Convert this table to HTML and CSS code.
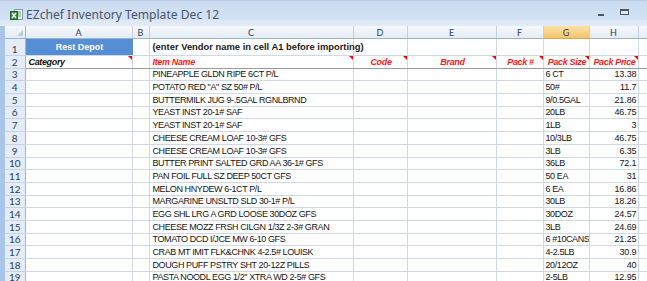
FILE: index.html
```
<!DOCTYPE html>
<html>
<head>
<meta charset="utf-8">
<link rel="stylesheet" href="styles.css">
</head>
<body>
<div class="window">
  <div class="titlebar">
    <svg class="xl-icon" width="13" height="13" viewBox="0 0 13 13">
      <rect x="4.5" y="1.5" width="8" height="10" fill="#f4f6f8" stroke="#8a97a6"/>
      <line x1="7" y1="4" x2="11" y2="4" stroke="#6ca36c"/>
      <line x1="7" y1="6" x2="11" y2="6" stroke="#6ca36c"/>
      <line x1="7" y1="8" x2="11" y2="8" stroke="#6ca36c"/>
      <rect x="0.5" y="3.5" width="7" height="8" fill="#2f8a3c" stroke="#1f6a2b"/>
      <path d="M2 5 L6 10 M6 5 L2 10" stroke="#fff" stroke-width="1.3"/>
    </svg>
    <span class="title">EZchef Inventory Template Dec 12</span>
    <div class="controls">
      <svg width="8" height="8" viewBox="0 0 8 8"><rect x="1" y="5" width="6" height="2" fill="#4a5568"/></svg>
      <svg width="9" height="8" viewBox="0 0 9 8"><rect x="0.5" y="0.5" width="8" height="5" fill="#dfe7f1" stroke="#4a5568"/><rect x="0" y="0" width="9" height="2" fill="#4a5568"/></svg>
    </div>
  </div>
  <div class="sheet">
    <div class="strip"></div>
    <table class="grid">
      <colgroup>
        <col class="c-rn"><col class="c-a"><col class="c-b"><col class="c-c"><col class="c-d"><col class="c-e"><col class="c-f"><col class="c-g"><col class="c-h"><col class="c-i">
      </colgroup>
      <tr class="colhead">
        <th class="corner"><span class="selall"></span></th>
        <th>A</th><th>B</th><th>C</th><th>D</th><th>E</th><th>F</th><th class="sel">G</th><th>H</th><th></th>
      </tr>
      <tr class="r1">
        <th class="rn">1</th>
        <td class="depot">Rest Depot</td><td></td>
        <td class="note">(enter Vendor name in cell A1 before importing)</td>
        <td></td><td></td><td></td><td></td><td></td><td></td>
      </tr>
      <tr class="r2">
        <th class="rn">2</th>
        <td class="hdr black cm">Category</td><td></td>
        <td class="hdr cm">Item Name</td>
        <td class="hdr ctr cm">Code</td>
        <td class="hdr ctr cm">Brand</td>
        <td class="hdr ctr cm">Pack #</td>
        <td class="hdr ctr cm">Pack Size</td>
        <td class="hdr ctr cm">Pack Price</td>
        <td></td>
      </tr>
      <tr><th class="rn">3</th><td></td><td></td><td>PINEAPPLE GLDN RIPE 6CT P/L</td><td></td><td></td><td></td><td class="sz">6 CT</td><td class="num">13.38</td><td></td></tr>
      <tr><th class="rn">4</th><td></td><td></td><td>POTATO RED "A" SZ 50# P/L</td><td></td><td></td><td></td><td class="sz">50#</td><td class="num">11.7</td><td></td></tr>
      <tr><th class="rn">5</th><td></td><td></td><td>BUTTERMILK JUG 9-.5GAL RGNLBRND</td><td></td><td></td><td></td><td class="sz">9/0.5GAL</td><td class="num">21.86</td><td></td></tr>
      <tr><th class="rn">6</th><td></td><td></td><td>YEAST INST 20-1# SAF</td><td></td><td></td><td></td><td class="sz">20LB</td><td class="num">46.75</td><td></td></tr>
      <tr><th class="rn">7</th><td></td><td></td><td>YEAST INST 20-1# SAF</td><td></td><td></td><td></td><td class="sz">1LB</td><td class="num">3</td><td></td></tr>
      <tr><th class="rn">8</th><td></td><td></td><td>CHEESE CREAM LOAF 10-3# GFS</td><td></td><td></td><td></td><td class="sz">10/3LB</td><td class="num">46.75</td><td></td></tr>
      <tr><th class="rn">9</th><td></td><td></td><td>CHEESE CREAM LOAF 10-3# GFS</td><td></td><td></td><td></td><td class="sz">3LB</td><td class="num">6.35</td><td></td></tr>
      <tr><th class="rn">10</th><td></td><td></td><td>BUTTER PRINT SALTED GRD AA 36-1# GFS</td><td></td><td></td><td></td><td class="sz">36LB</td><td class="num">72.1</td><td></td></tr>
      <tr><th class="rn">11</th><td></td><td></td><td>PAN FOIL FULL SZ DEEP 50CT GFS</td><td></td><td></td><td></td><td class="sz">50 EA</td><td class="num">31</td><td></td></tr>
      <tr><th class="rn">12</th><td></td><td></td><td>MELON HNYDEW 6-1CT P/L</td><td></td><td></td><td></td><td class="sz">6 EA</td><td class="num">16.86</td><td></td></tr>
      <tr><th class="rn">13</th><td></td><td></td><td>MARGARINE UNSLTD SLD 30-1# P/L</td><td></td><td></td><td></td><td class="sz">30LB</td><td class="num">18.26</td><td></td></tr>
      <tr><th class="rn">14</th><td></td><td></td><td>EGG SHL LRG A GRD LOOSE 30DOZ GFS</td><td></td><td></td><td></td><td class="sz">30DOZ</td><td class="num">24.57</td><td></td></tr>
      <tr><th class="rn">15</th><td></td><td></td><td>CHEESE MOZZ FRSH CILGN 1/3Z 2-3# GRAN</td><td></td><td></td><td></td><td class="sz">3LB</td><td class="num">24.69</td><td></td></tr>
      <tr><th class="rn">16</th><td></td><td></td><td>TOMATO DCD I/JCE MW 6-10 GFS</td><td></td><td></td><td></td><td class="sz">6 #10CANS</td><td class="num">21.25</td><td></td></tr>
      <tr><th class="rn">17</th><td></td><td></td><td>CRAB MT IMIT FLK&amp;CHNK 4-2.5# LOUISK</td><td></td><td></td><td></td><td class="sz">4-2.5LB</td><td class="num">30.9</td><td></td></tr>
      <tr><th class="rn">18</th><td></td><td></td><td>DOUGH PUFF PSTRY SHT 20-12Z PILLS</td><td></td><td></td><td></td><td class="sz">20/12OZ</td><td class="num">40</td><td></td></tr>
      <tr><th class="rn">19</th><td></td><td></td><td>PASTA NOODL EGG 1/2" XTRA WD 2-5# GFS</td><td></td><td></td><td></td><td class="sz">2-5LB</td><td class="num">12.95</td><td></td></tr>
    </table>
  </div>
</div>
</body>
</html>
```
FILE: styles.css
```
html, body {
  margin: 0;
  padding: 0;
  background: #ffffff;
  overflow: hidden;
}
.window {
  width: 647px;
  height: 281px;
  overflow: hidden;
  display: flex;
  flex-direction: column;
}
.titlebar {
  height: 26px;
  flex: none;
  display: flex;
  align-items: center;
  padding: 2px 0 0 10px;
  box-sizing: border-box;
  background: linear-gradient(#cbdcf1 0%, #d3e2f4 74%, #dde8f6 78%, #e2ebf7 100%);
  border-top: 1px solid #b6c9e2;
}
.xl-icon {
  flex: none;
  margin-right: 3px;
}
.title {
  font-family: "Noto Sans", "DejaVu Sans", sans-serif;
  font-size: 12.1px;
  color: #4b5566;
}
.controls {
  margin-left: auto;
  display: flex;
  gap: 15px;
  margin-right: 18px;
  align-items: center;
  padding-bottom: 3px;
}
.sheet {
  display: flex;
  flex: 1;
}
.strip {
  width: 5px;
  flex: none;
  background: #a9c5ea;
}
.grid {
  border-collapse: collapse;
  table-layout: fixed;
  width: 642px;
  font-family: "Liberation Sans", Arial, sans-serif;
  font-size: 9px;
  letter-spacing: -0.4px;
  color: #151515;
}
.c-rn { width: 20px; }
.c-a { width: 107px; }
.c-b { width: 17px; }
.c-c { width: 204px; }
.c-d { width: 54px; }
.c-e { width: 89px; }
.c-f { width: 47px; }
.c-g { width: 46px; }
.c-h { width: 49px; }
.c-i { width: 9px; }
.grid td {
  border: 1px solid #d0d7e5;
  border-top: none;
  border-left: none;
  padding: 0 1px 0 3px;
  height: 11.7px;
  line-height: 11px;
  vertical-align: bottom;
  white-space: nowrap;
  overflow: hidden;
}
.grid td.sz {
  padding: 0 0 0 2px;
}
.colhead th {
  height: 12px;
  padding: 0;
  font-weight: normal;
  font-family: Lato, "Liberation Sans", sans-serif;
  font-size: 9px;
  letter-spacing: 0;
  line-height: 11px;
  color: #27415e;
  background: linear-gradient(#f6f9fc, #e4ebf4);
  border-right: 1px solid #c5d2e2;
  border-bottom: 1px solid #9eb6ce;
  vertical-align: middle;
}
.colhead th.sel {
  background: linear-gradient(#fbe1a6, #f2c46a);
  border-bottom-color: #e2a646;
}
.colhead th.corner {
  position: relative;
  border-right: 1px solid #9eb6ce;
}
.selall {
  position: absolute;
  right: 2px;
  bottom: 2px;
  width: 0;
  height: 0;
  border-left: 6px solid transparent;
  border-bottom: 6px solid #b7c9df;
}
.grid th.rn {
  padding: 0;
  font-family: Lato, "Liberation Sans", sans-serif;
  font-weight: normal;
  font-size: 10px;
  letter-spacing: 0;
  line-height: 11px;
  color: #27415e;
  background: #e4ecf7;
  border-right: 1px solid #9eb6ce;
  border-bottom: 1px solid #c5d3e4;
  text-align: center;
  vertical-align: bottom;
  height: 11.7px;
}
.r1 td, .r1 th.rn {
  height: 16px;
}
.r1 td.depot {
  background: #558ed5;
  color: #ffffff;
  font-weight: bold;
  font-size: 9px;
  letter-spacing: 0;
  text-align: center;
  border-right-color: #558ed5;
  line-height: 14px;
  vertical-align: middle;
}
.r1 td.note {
  font-weight: bold;
  font-size: 9.4px;
  letter-spacing: 0;
  color: #1a1a1a;
  overflow: visible;
  line-height: 14px;
  vertical-align: middle;
}
.r2 td {
  border-bottom: 1px solid #9c9c9c;
}
.r2 td.hdr {
  position: relative;
  font-weight: bold;
  font-style: italic;
  font-size: 9px;
  letter-spacing: -0.35px;
  color: #ff1a1a;
  overflow: visible;
}
.r2 td.black {
  color: #111;
}
.r2 td.ctr {
  text-align: center;
}
.r2 td.cm::after {
  content: "";
  position: absolute;
  top: 0;
  right: 0;
  width: 0;
  height: 0;
  border-left: 4px solid transparent;
  border-top: 4px solid #ff0000;
}
.grid td.num {
  text-align: right;
  padding-right: 1px;
  letter-spacing: -0.1px;
}
```
